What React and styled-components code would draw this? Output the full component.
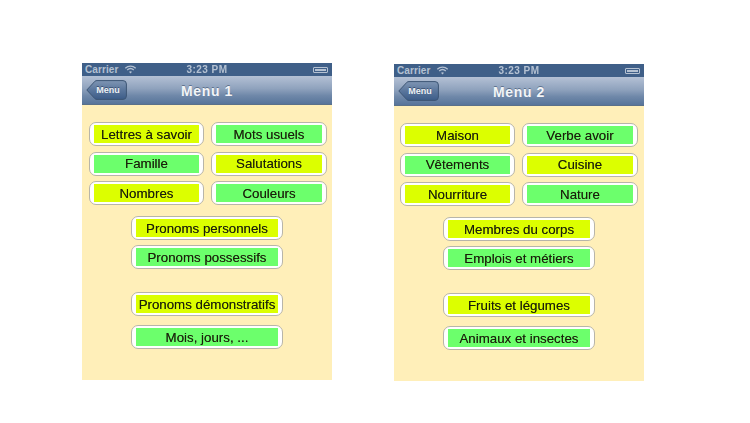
import styled, { createGlobalStyle } from 'styled-components';

const GlobalStyle = createGlobalStyle`
  html, body {
    margin: 0;
    padding: 0;
    background: #fff;
  }
  body {
    font-family: "Liberation Sans", Arial, sans-serif;
  }
`;

const Page = styled.div`
  width: 750px;
  height: 423px;
  overflow: hidden;
  display: flex;
  align-items: flex-start;
  gap: 62px;
  padding: 63px 0 0 82px;
  box-sizing: border-box;
`;

const Phone = styled.section`
  width: 250px;
  height: 317px;
  margin-top: ${(p) => p.$offset || 0}px;
  display: flex;
  flex-direction: column;
  filter: blur(0.5px);
`;

const StatusBar = styled.div`
  height: 13px;
  display: grid;
  grid-template-columns: 1fr auto 1fr;
  align-items: center;
  padding: 0 3px;
  background: #3f5f88;
  color: #b4c1d2;
  font-size: 10px;
  font-weight: 700;
`;

const Carrier = styled.div`
  display: flex;
  align-items: center;
  gap: 5px;
  letter-spacing: 0.1px;
`;

const Clock = styled.div`
  letter-spacing: 0.45px;
`;

const Battery = styled.div`
  justify-self: end;
  width: 15px;
  height: 6px;
  margin-right: 1px;
  padding: 1px;
  box-sizing: border-box;
  border: 1px solid #b4c1d2;
  border-radius: 1px;
  &::before {
    content: '';
    display: block;
    height: 100%;
    background: #b4c1d2;
  }
`;

const NavBar = styled.header`
  position: relative;
  height: 29px;
  display: flex;
  align-items: center;
  justify-content: center;
  background: linear-gradient(#b4c1d5 0%, #8fa2bd 45%, #6f88a9 70%, #57749a 100%);
  border-bottom: 1px solid #5a7089;
  box-sizing: border-box;
`;

const NavTitle = styled.h1`
  margin: 1px 0 0 0;
  color: #f2f5f8;
  font-size: 14px;
  font-weight: 700;
  letter-spacing: 0.6px;
  text-shadow: 0 -1px 0 rgba(40, 60, 90, 0.5);
`;

const BackButton = styled.button`
  position: absolute;
  left: 4px;
  top: 4px;
  width: 41px;
  height: 20px;
  padding: 0 0 0 3px;
  border: 0;
  background: none;
  color: #eef2f6;
  font-family: inherit;
  font-size: 9px;
  font-weight: 700;
  text-shadow: 0 -1px 0 rgba(30, 50, 80, 0.6);
  span {
    position: relative;
  }
  svg {
    position: absolute;
    inset: 0;
  }
`;

const Body = styled.main`
  flex: 1;
  background: #ffefb9;
  padding-top: 17px;
  display: flex;
  flex-direction: column;
  align-items: center;
`;

const Grid = styled.div`
  display: grid;
  grid-template-columns: 115px 116px;
  grid-auto-rows: 24px;
  gap: 5.5px 7px;
  margin-bottom: 11px;
  margin-left: ${(p) => p.$shift || 0}px;
`;

const Stack = styled.div`
  display: flex;
  flex-direction: column;
  gap: ${(p) => p.$gap}px;
  margin-bottom: ${(p) => p.$after || 0}px;
`;

const MenuButton = styled.button`
  width: ${(p) => (p.$wide ? '152px' : '100%')};
  height: 24px;
  padding: 2px 4px;
  box-sizing: border-box;
  background: #fff;
  border: 1px solid #b8b5a9;
  border-radius: 7px;
  font-family: inherit;
  color: #1b1f0b;
  span {
    display: flex;
    align-items: center;
    justify-content: center;
    height: 100%;
    background: ${(p) => (p.$tone === 'lime' ? '#dcff00' : '#6cff6c')};
    font-size: 13.3px;
    text-shadow: 0 0 0.5px rgba(20, 25, 5, 0.6);
    white-space: nowrap;
  }
`;

const Wifi = () => (
  <svg width="13" height="9" viewBox="0 0 12 9" fill="none" stroke="#b4c1d2" strokeWidth="1.3">
    <path d="M0.8 3.2 C3.8 0.4 8.2 0.4 11.2 3.2" />
    <path d="M2.7 5 C4.6 3.3 7.4 3.3 9.3 5" />
    <path d="M6 8.6 L4.5 6.8 C5.4 6.1 6.6 6.1 7.5 6.8 Z" fill="#b4c1d2" stroke="none" />
  </svg>
);

const BackShape = () => (
  <svg width="41" height="20" viewBox="0 0 41 20">
    <defs>
      <linearGradient id="backFill" x1="0" y1="0" x2="0" y2="1">
        <stop offset="0" stopColor="#7f95b3" />
        <stop offset="0.5" stopColor="#5a769c" />
        <stop offset="1" stopColor="#3c5c88" />
      </linearGradient>
    </defs>
    <path
      d="M0.8 10 L9 1.2 Q9.6 0.6 11 0.6 L37 0.6 Q40.4 0.6 40.4 4 L40.4 16 Q40.4 19.4 37 19.4 L11 19.4 Q9.6 19.4 9 18.8 Z"
      fill="url(#backFill)"
      stroke="#3d5675"
    />
  </svg>
);

const MenuScreen = ({ title, offset, shift, grid, pairs }) => (
  <Phone $offset={offset}>
    <StatusBar>
      <Carrier>
        Carrier
        <Wifi />
      </Carrier>
      <Clock>3:23 PM</Clock>
      <Battery />
    </StatusBar>
    <NavBar>
      <BackButton>
        <BackShape />
        <span>Menu</span>
      </BackButton>
      <NavTitle>{title}</NavTitle>
    </NavBar>
    <Body>
      <Grid $shift={shift}>
        {grid.map((label, i) => (
          <MenuButton key={label} $tone={(i + Math.floor(i / 2)) % 2 ? 'green' : 'lime'}>
            <span>{label}</span>
          </MenuButton>
        ))}
      </Grid>
      <Stack $gap={5} $after={23}>
        <MenuButton $wide $tone="lime"><span>{pairs[0]}</span></MenuButton>
        <MenuButton $wide $tone="green"><span>{pairs[1]}</span></MenuButton>
      </Stack>
      <Stack $gap={9}>
        <MenuButton $wide $tone="lime"><span>{pairs[2]}</span></MenuButton>
        <MenuButton $wide $tone="green"><span>{pairs[3]}</span></MenuButton>
      </Stack>
    </Body>
  </Phone>
);

export default function App() {
  return (
    <>
      <GlobalStyle />
      <Page>
        <MenuScreen
          title="Menu 1"
          shift={2}
          grid={['Lettres à savoir', 'Mots usuels', 'Famille', 'Salutations', 'Nombres', 'Couleurs']}
          pairs={['Pronoms personnels', 'Pronoms possessifs', 'Pronoms démonstratifs', 'Mois, jours, ...']}
        />
        <MenuScreen
          title="Menu 2"
          offset={1}
          grid={['Maison', 'Verbe avoir', 'Vêtements', 'Cuisine', 'Nourriture', 'Nature']}
          pairs={['Membres du corps', 'Emplois et métiers', 'Fruits et légumes', 'Animaux et insectes']}
        />
      </Page>
    </>
  );
}
